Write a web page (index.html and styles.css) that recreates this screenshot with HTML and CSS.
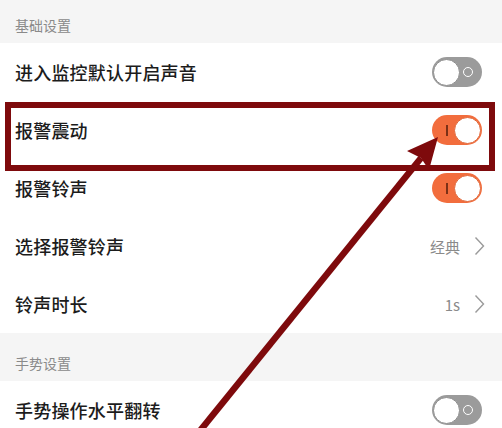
FILE: index.html
```html
<!DOCTYPE html>
<html lang="zh">
<head>
<meta charset="utf-8">
<link rel="stylesheet" href="styles.css">
</head>
<body>
<div class="page">
  <div class="list">
    <div class="section first">基础设置</div>
    <div class="row"><span class="label">进入监控默认开启声音</span>
      <span class="switch off"><span class="knob"></span><span class="mark-o"></span></span></div>
    <div class="row"><span class="label">报警震动</span>
      <span class="switch on"><span class="mark-i"></span><span class="knob"></span></span></div>
    <div class="row"><span class="label">报警铃声</span>
      <span class="switch on"><span class="mark-i"></span><span class="knob"></span></span></div>
    <div class="row link"><span class="label">选择报警铃声</span>
      <span class="value">经典<svg class="chev" width="11" height="20" viewBox="0 0 11 20"><path d="M1.5 1.5 L9.5 10 L1.5 18.5" fill="none" stroke="#9a9a9a" stroke-width="1.4"/></svg></span></div>
    <div class="row link"><span class="label">铃声时长</span>
      <span class="value">1s<svg class="chev" width="11" height="20" viewBox="0 0 11 20"><path d="M1.5 1.5 L9.5 10 L1.5 18.5" fill="none" stroke="#9a9a9a" stroke-width="1.4"/></svg></span></div>
    <div class="section">手势设置</div>
    <div class="row"><span class="label">手势操作水平翻转</span>
      <span class="switch off"><span class="knob"></span><span class="mark-o"></span></span></div>
  </div>
  <div class="highlight"></div>
  <svg class="arrow" width="502" height="428" viewBox="0 0 502 428">
    <line x1="199" y1="432" x2="421" y2="158" stroke="#7e0a0c" stroke-width="6.5"/>
    <polygon points="438,137 429,170 421,158 407,151" fill="#7e0a0c"/>
  </svg>
</div>
</body>
</html>
```
FILE: styles.css
```css
html, body {
  margin: 0;
  padding: 0;
  background: #ffffff;
}
body {
  width: 502px;
  height: 428px;
  overflow: hidden;
  font-family: "Noto Sans CJK SC", "Noto Sans", sans-serif;
}
.page {
  position: relative;
  width: 502px;
  height: 428px;
  overflow: hidden;
}
.list {
  display: flex;
  flex-direction: column;
  margin-top: -5px;
}
.section {
  height: 48px;
  box-sizing: border-box;
  background: #f5f5f5;
  padding: 20px 0 0 15px;
  font-size: 14px;
  line-height: 20px;
  color: #8a8a8a;
}
.row {
  height: 58px;
  box-sizing: border-box;
  display: flex;
  align-items: center;
  justify-content: space-between;
  padding: 0 20px 0 15px;
  background: #fff;
}
.row.link {
  padding-right: 17px;
}
.label {
  font-size: 18px;
  font-weight: 500;
  color: #1c1c1c;
  letter-spacing: 0.2px;
}
.value {
  display: flex;
  align-items: center;
  gap: 14px;
  font-size: 15px;
  color: #8a8a8a;
}
.chev {
  display: block;
}
.switch {
  width: 50px;
  height: 30px;
  box-sizing: border-box;
  border-radius: 15px;
  display: flex;
  align-items: center;
  position: relative;
}
.switch.off {
  background: #9b9b9b;
  padding: 0 9px 0 1px;
  justify-content: space-between;
}
.switch.on {
  background: #f26d3d;
  padding: 0 1px 0 14px;
  justify-content: space-between;
}
.knob {
  width: 27px;
  height: 27px;
  box-sizing: border-box;
  border-radius: 50%;
  background: #fff;
}
.off .knob {
  border: 1px solid #8e8e8e;
}
.on .knob {
  border: 1px solid #e0683a;
}
.mark-o {
  width: 10px;
  height: 10px;
  box-sizing: border-box;
  border: 1.5px solid #fff;
  border-radius: 50%;
}
.mark-i {
  width: 2px;
  height: 11px;
  background: #7b3016;
}
.highlight {
  position: absolute;
  left: 5px;
  top: 102px;
  width: 490px;
  height: 69px;
  box-sizing: border-box;
  border: 6px solid #7e0a0c;
}
.arrow {
  position: absolute;
  left: 0;
  top: 0;
}
```
